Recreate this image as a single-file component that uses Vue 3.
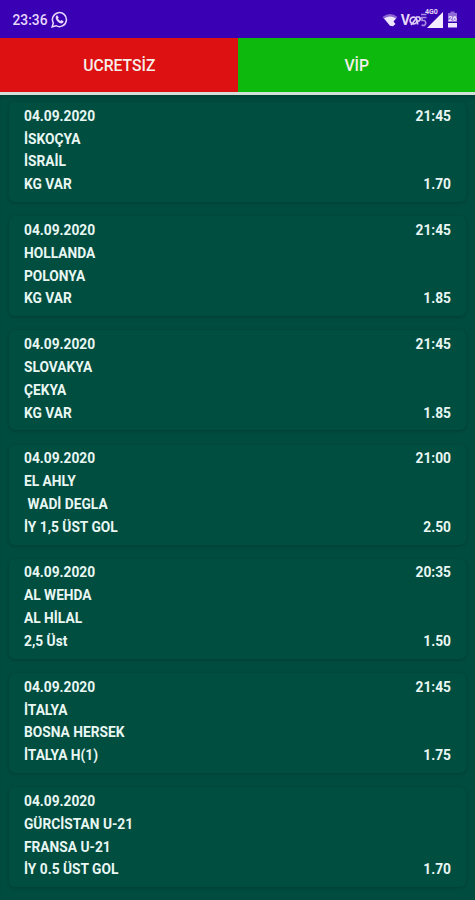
<template>
  <div class="app">
    <header class="status">
      <div class="status__left">
        <span class="status__time">23:36</span>
        <svg class="status__chat" viewBox="0 0 17 17">
          <path d="M1.2 15.8 L2.3 12 A7 7 0 1 1 5 14.7 Z" />
          <path class="fill" d="M5.2 4.8 L6.4 4.3 L7.7 6.7 L7 7.7 Q7.8 9.3 9.5 10 L10.4 9.1 L12.6 10.3 Q12.4 12.3 10.6 12.4 C7.8 12.3 4.6 9 4.7 6.4 Q4.7 5.4 5.2 4.8 Z" />
        </svg>
      </div>
      <div class="status__right">
        <svg class="status__wifi" viewBox="0 0 16 14">
          <path class="faint" d="M0.5 4 Q8 -2 15.5 4 L13.5 6.4 Q8 2.5 2.5 6.4 Z" />
          <path d="M2 5.5 Q8 1.5 14 5.5 L11.5 8.5 L13.5 11 L11 13.3 L8 12.8 Z" />
        </svg>
        <span class="status__vo">V</span>
        <svg class="status__lte" viewBox="0 0 18 14">
          <circle cx="4.5" cy="7.5" r="3.4" />
          <path d="M2 12 L7.5 5 M7 4 H10 Q12.5 6 10 8 H8.5 V11.5" />
          <path class="faint" d="M12 1.5 H17.5 M12 4.5 H17.5 M13 4.5 V7.5 H15.5 Q18 10 15.5 12.3 H12.5" />
        </svg>
        <div class="status__signal">
          <span class="status__net">4G0</span>
          <svg viewBox="0 0 16 16"><path d="M0 16 L16 0 V16 Z" /></svg>
        </div>
        <svg class="status__battery" viewBox="0 0 11 17">
          <path class="faint" d="M3.5 0.5 H7.5 V2 H10 V11 H1 V2 H3.5 Z" />
          <path d="M1 12 H10 V16.5 H1 Z" />
          <text x="5.5" y="10">26</text>
        </svg>
      </div>
    </header>

    <nav class="tabs">
      <button class="tab tab--free">UCRETSİZ</button>
      <button class="tab tab--vip">VİP</button>
    </nav>

    <main class="list">
      <article v-for="(m, i) in matches" :key="i" class="card">
        <div class="row">
          <span>04.09.2020</span>
          <span>{{ m.time }}</span>
        </div>
        <div class="row">{{ m.home }}</div>
        <div class="row">{{ m.away }}</div>
        <div class="row">
          <span>{{ m.tip }}</span>
          <span>{{ m.odds }}</span>
        </div>
      </article>
    </main>
  </div>
</template>

<script setup>
const matches = [
  { time: '21:45', home: 'İSKOÇYA', away: 'İSRAİL', tip: 'KG VAR', odds: '1.70' },
  { time: '21:45', home: 'HOLLANDA', away: 'POLONYA', tip: 'KG VAR', odds: '1.85' },
  { time: '21:45', home: 'SLOVAKYA', away: 'ÇEKYA', tip: 'KG VAR', odds: '1.85' },
  { time: '21:00', home: 'EL AHLY', away: ' WADİ DEGLA', tip: 'İY 1,5 ÜST GOL', odds: '2.50' },
  { time: '20:35', home: 'AL WEHDA', away: 'AL HİLAL', tip: '2,5 Üst', odds: '1.50' },
  { time: '21:45', home: 'İTALYA', away: 'BOSNA HERSEK', tip: 'İTALYA H(1)', odds: '1.75' },
  { time: '', home: 'GÜRCİSTAN U-21', away: 'FRANSA U-21', tip: 'İY 0.5 ÜST GOL', odds: '1.70' }
]
</script>

<style>
body {
  margin: 0;
  background: #004d40;
}
</style>

<style scoped>
.app {
  height: 900px;
  display: flex;
  flex-direction: column;
  overflow: hidden;
  background: #004d40;
  color: #e9f7f3;
  font-family: Roboto, sans-serif;
}

.status {
  height: 38px;
  flex: none;
  box-sizing: border-box;
  padding: 1px 17px 0 12.5px;
  display: flex;
  align-items: center;
  justify-content: space-between;
  background: #3a00b3;
  color: #e6d9fa;
}

.status__left,
.status__right {
  display: flex;
  align-items: center;
}

.status__left {
  gap: 3px;
}

.status__time {
  font-size: 13.8px;
  font-weight: 500;
}

.status__chat {
  width: 17px;
  height: 17px;
  fill: none;
  stroke: #e6d9fa;
  stroke-width: 1.5;
}

.status__chat .fill {
  fill: #e6d9fa;
  stroke: none;
}

.status__wifi {
  width: 16px;
  height: 14px;
  fill: #efe6ff;
  margin-right: 3px;
}

.status__wifi .faint {
  fill: #8c66d2;
}

.status__vo {
  font-size: 14px;
  font-weight: 700;
}

.status__lte {
  width: 18px;
  height: 14px;
  margin-left: -1px;
  fill: none;
  stroke: #dccdf7;
  stroke-width: 1.7;
}

.status__lte .faint {
  stroke: #a68ae0;
}

.status__signal {
  position: relative;
  height: 16px;
  margin-right: 4px;
}

.status__signal svg {
  display: block;
  width: 16px;
  height: 16px;
  fill: #f4edff;
}

.status__net {
  position: absolute;
  left: -2px;
  top: -3px;
  font-size: 7px;
  line-height: 7px;
  font-weight: 700;
}

.status__battery {
  width: 11px;
  height: 17px;
  fill: #efe6ff;
}

.status__battery .faint {
  fill: #8f6dd6;
}

.status__battery text {
  font-size: 7.5px;
  font-weight: 700;
  text-anchor: middle;
  fill: #efe6ff;
}

.tabs {
  height: 54px;
  flex: none;
  display: flex;
  border-bottom: 3px solid #d5dfd9;
}

.tab {
  flex: 1;
  border: 0;
  padding: 0 0 0 1px;
  color: #f5efe9;
  font: 500 15.7px Roboto, sans-serif;
}

.tab--free {
  background: #dd1111;
}

.tab--vip {
  background: #0eb90e;
}

.list {
  flex: 1;
  padding: 7px 9px 0;
  display: flex;
  flex-direction: column;
  gap: 14.2px;
  box-shadow: inset 0 4px 4px -2px rgba(0, 25, 22, .3);
}

.card {
  height: 100px;
  flex: none;
  box-sizing: border-box;
  padding: 2.3px 15px 0;
  border-radius: 6px;
  background: #004e40;
  box-shadow: 0 1px 4px rgba(0, 30, 25, .35);
}

.row {
  height: 22.85px;
  display: flex;
  align-items: center;
  justify-content: space-between;
  font-size: 13.75px;
  font-weight: 700;
  white-space: pre;
}
</style>
